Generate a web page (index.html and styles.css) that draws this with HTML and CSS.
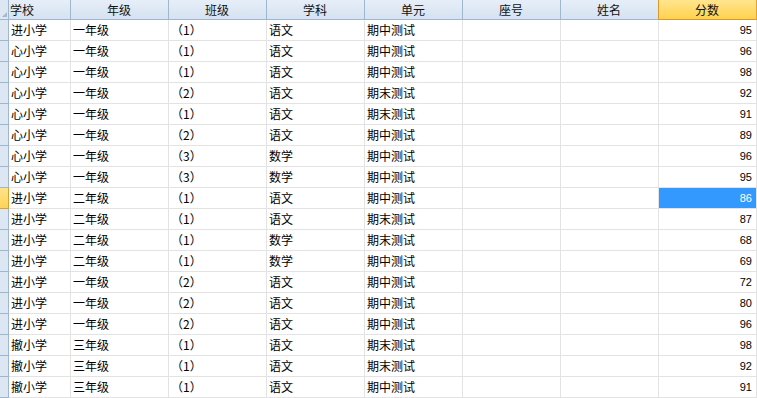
FILE: index.html
```html
<!DOCTYPE html>
<html lang="zh">
<head>
<meta charset="utf-8">
<link rel="stylesheet" href="styles.css">
</head>
<body>
<div class="sheet">
  <div class="row head">
    <div class="rh corner"><span class="tri"></span></div>
    <div class="c hc first">学校</div>
    <div class="c hc">年级</div>
    <div class="c hc">班级</div>
    <div class="c hc">学科</div>
    <div class="c hc">单元</div>
    <div class="c hc">座号</div>
    <div class="c hc">姓名</div>
    <div class="c hc active">分数</div>
  </div>
  <div class="row"><div class="rh"></div><div class="c">进小学</div><div class="c">一年级</div><div class="c">（1）</div><div class="c">语文</div><div class="c">期中测试</div><div class="c"></div><div class="c"></div><div class="c num">95</div></div>
  <div class="row"><div class="rh"></div><div class="c">心小学</div><div class="c">一年级</div><div class="c">（1）</div><div class="c">语文</div><div class="c">期中测试</div><div class="c"></div><div class="c"></div><div class="c num">96</div></div>
  <div class="row"><div class="rh"></div><div class="c">心小学</div><div class="c">一年级</div><div class="c">（1）</div><div class="c">语文</div><div class="c">期中测试</div><div class="c"></div><div class="c"></div><div class="c num">98</div></div>
  <div class="row"><div class="rh"></div><div class="c">心小学</div><div class="c">一年级</div><div class="c">（2）</div><div class="c">语文</div><div class="c">期末测试</div><div class="c"></div><div class="c"></div><div class="c num">92</div></div>
  <div class="row"><div class="rh"></div><div class="c">心小学</div><div class="c">一年级</div><div class="c">（1）</div><div class="c">语文</div><div class="c">期末测试</div><div class="c"></div><div class="c"></div><div class="c num">91</div></div>
  <div class="row"><div class="rh"></div><div class="c">心小学</div><div class="c">一年级</div><div class="c">（2）</div><div class="c">语文</div><div class="c">期中测试</div><div class="c"></div><div class="c"></div><div class="c num">89</div></div>
  <div class="row"><div class="rh"></div><div class="c">心小学</div><div class="c">一年级</div><div class="c">（3）</div><div class="c">数学</div><div class="c">期中测试</div><div class="c"></div><div class="c"></div><div class="c num">96</div></div>
  <div class="row"><div class="rh"></div><div class="c">心小学</div><div class="c">一年级</div><div class="c">（3）</div><div class="c">数学</div><div class="c">期中测试</div><div class="c"></div><div class="c"></div><div class="c num">95</div></div>
  <div class="row"><div class="rh sel"></div><div class="c">进小学</div><div class="c">二年级</div><div class="c">（1）</div><div class="c">语文</div><div class="c">期中测试</div><div class="c"></div><div class="c"></div><div class="c num cur">86</div></div>
  <div class="row"><div class="rh"></div><div class="c">进小学</div><div class="c">二年级</div><div class="c">（1）</div><div class="c">语文</div><div class="c">期末测试</div><div class="c"></div><div class="c"></div><div class="c num">87</div></div>
  <div class="row"><div class="rh"></div><div class="c">进小学</div><div class="c">二年级</div><div class="c">（1）</div><div class="c">数学</div><div class="c">期末测试</div><div class="c"></div><div class="c"></div><div class="c num">68</div></div>
  <div class="row"><div class="rh"></div><div class="c">进小学</div><div class="c">二年级</div><div class="c">（1）</div><div class="c">数学</div><div class="c">期中测试</div><div class="c"></div><div class="c"></div><div class="c num">69</div></div>
  <div class="row"><div class="rh"></div><div class="c">进小学</div><div class="c">一年级</div><div class="c">（2）</div><div class="c">语文</div><div class="c">期中测试</div><div class="c"></div><div class="c"></div><div class="c num">72</div></div>
  <div class="row"><div class="rh"></div><div class="c">进小学</div><div class="c">一年级</div><div class="c">（2）</div><div class="c">语文</div><div class="c">期中测试</div><div class="c"></div><div class="c"></div><div class="c num">80</div></div>
  <div class="row"><div class="rh"></div><div class="c">进小学</div><div class="c">一年级</div><div class="c">（2）</div><div class="c">语文</div><div class="c">期中测试</div><div class="c"></div><div class="c"></div><div class="c num">96</div></div>
  <div class="row"><div class="rh"></div><div class="c">撤小学</div><div class="c">三年级</div><div class="c">（1）</div><div class="c">语文</div><div class="c">期末测试</div><div class="c"></div><div class="c"></div><div class="c num">98</div></div>
  <div class="row"><div class="rh"></div><div class="c">撤小学</div><div class="c">三年级</div><div class="c">（1）</div><div class="c">语文</div><div class="c">期末测试</div><div class="c"></div><div class="c"></div><div class="c num">92</div></div>
  <div class="row"><div class="rh"></div><div class="c">撤小学</div><div class="c">三年级</div><div class="c">（1）</div><div class="c">语文</div><div class="c">期中测试</div><div class="c"></div><div class="c"></div><div class="c num">91</div></div>
</div>
</body>
</html>
```
FILE: styles.css
```css
html, body {
  margin: 0;
  padding: 0;
  background: #ffffff;
}
body {
  font-family: "Noto Sans CJK SC", "Liberation Sans", sans-serif;
  font-size: 12px;
  color: #000;
  width: 757px;
  height: 398px;
  overflow: hidden;
}
.sheet {
  display: flex;
  flex-direction: column;
}
.row {
  display: grid;
  grid-template-columns: 9px 62px repeat(7, 98px);
  height: 21px;
}
.row.head {
  height: 20px;
}
.c, .rh {
  box-sizing: border-box;
  border-right: 1px solid #e3e3e3;
  border-bottom: 1px solid #e3e3e3;
  padding: 0 3px 0 2px;
  line-height: 20px;
  white-space: nowrap;
  overflow: hidden;
}
.c:first-of-type { }
.rh {
  padding: 0;
  background: #dde7f3;
  border-right: 1px solid #9eb6ce;
  border-bottom: 1px solid #9eb6ce;
}
.rh.sel {
  background: linear-gradient(#ffe38c, #ffd35a);
  border-right: 1px solid #d9a02a;
  border-bottom: 1px solid #d9a02a;
}
.corner {
  position: relative;
  background: #dde7f3;
}
.tri {
  position: absolute;
  right: 1px;
  bottom: 2px;
  width: 0;
  height: 0;
  border-left: 5px solid transparent;
  border-bottom: 5px solid #a9b8c8;
}
.hc {
  background: linear-gradient(#e6eef8, #d6e2f1);
  border-right: 1px solid #9eb6ce;
  border-bottom: 1px solid #9eb6ce;
  text-align: center;
  line-height: 19px;
  color: #111;
}
.hc.first {
  text-align: left;
  padding-left: 1px;
}
.hc.active {
  background: linear-gradient(#ffe58e, #ffd24f);
  border-right: 1px solid #e0a33a;
  border-bottom: 1px solid #d89a2a;
  border-left: 1px solid #d89a2a;
  margin-left: -1px;
}
.num {
  text-align: right;
  padding-right: 4px;
  font-family: "Liberation Sans", sans-serif;
  font-size: 11px;
}
.cur {
  background: #3399ff;
  color: #fff;
}
```
